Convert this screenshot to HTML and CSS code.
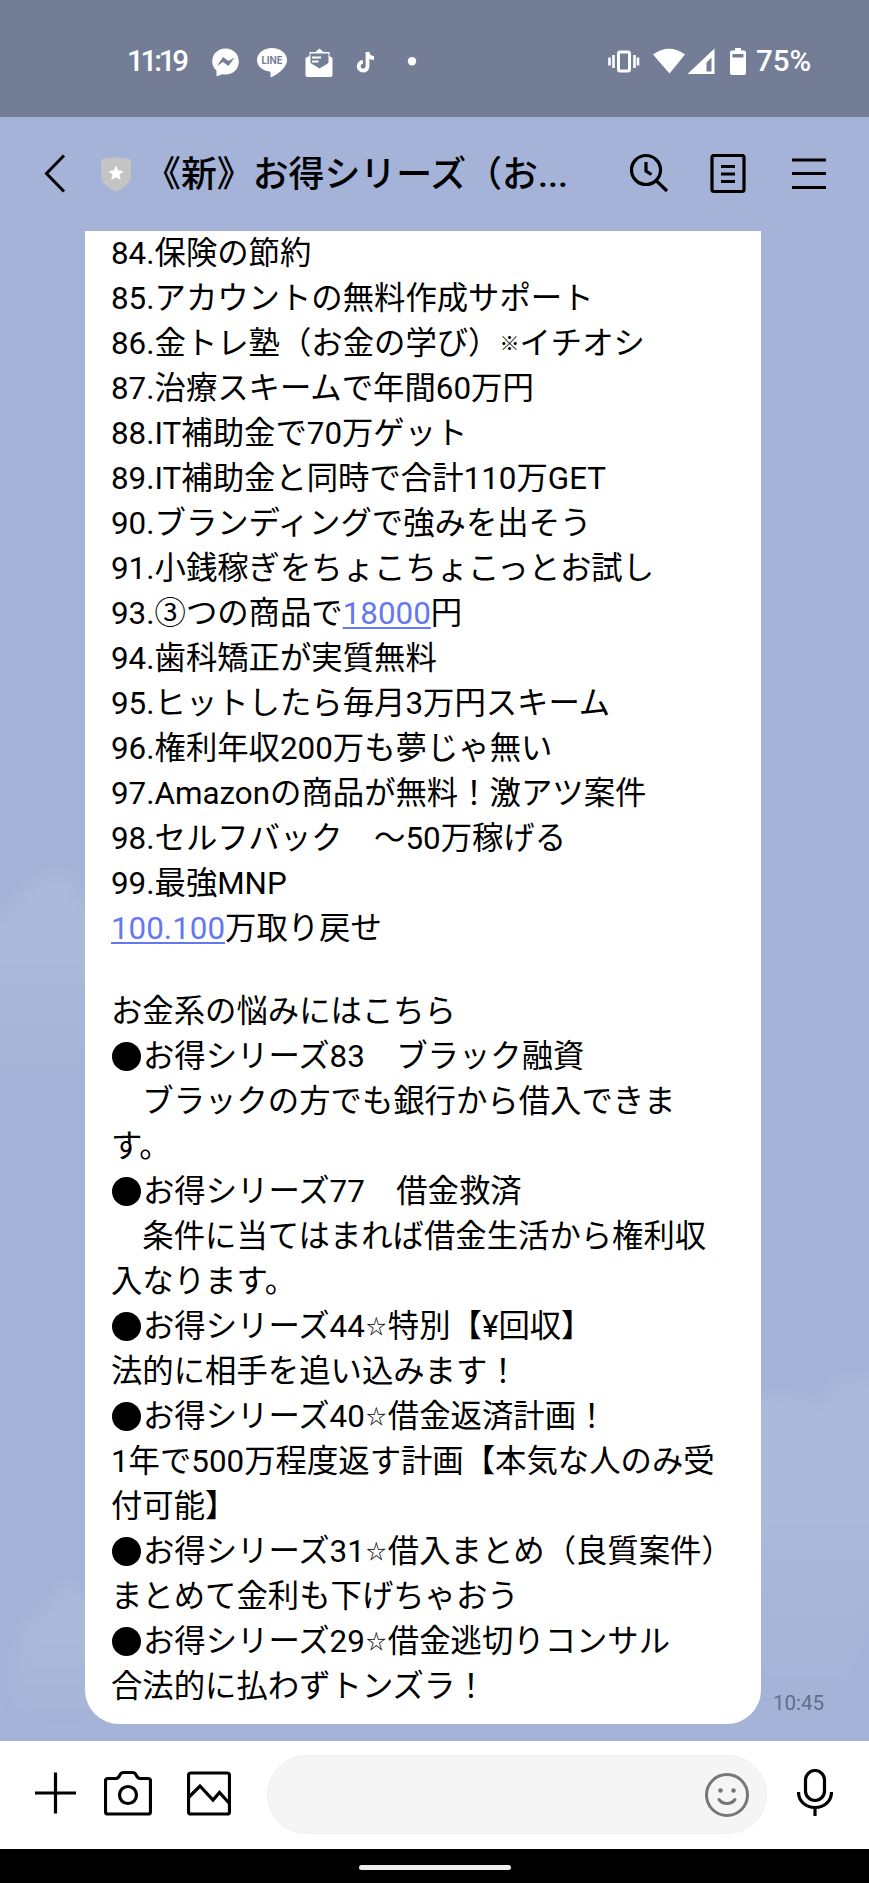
FILE: index.html
```html
<!DOCTYPE html>
<html lang="ja">
<head>
    <meta charset="utf-8">
    <title>お得シリーズ</title>
    <link rel="stylesheet" href="styles.css">
</head>
<body>
    <div class="status-bar">
        <span class="clock">11:19</span>
        <svg class="notifications" width="210" height="36" viewBox="0 0 210 36">
            <!-- messenger -->
            <path fill="#fff" d="M15.500 5.500C7.800 5.500 2.200 11 2.200 18.300c0 4 1.600 7 4.300 9.300v4.600c0 .8.600 1.100 1.300.8l4.200-1.800c1.100.3 2.300.4 3.500.4 7.700 0 13.300-5.600 13.300-13.100S23.200 5.500 15.500 5.500z"/>
            <path fill="#737d96" d="M7 23l6-9 5.500 4 6-3.500-6 8.500-5.500-4z"/>
            <!-- LINE -->
            <path fill="#fff" d="M62 5c-8.200 0-15 5.300-15 12 0 6 5.300 10.700 12.500 11.600 1.400.3 1.200 2.400 1 4.500-.1 1 .5 1.400 1.400 1C66 32 77 25.500 77 17c0-6.700-6.800-12-15-12z"/>
            <text class="line-logo" x="51.500" y="20.600" textLength="21" lengthAdjust="spacingAndGlyphs">LINE</text>
            <!-- mail -->
            <path fill="#fff" d="M95.500 15l4-2V9h6l4-3.500 4 3.500h6v4l3 2v17q0 2-2 2h-23q-2 0-2-2z"/>
            <path fill="#737d96" d="M100.500 10.500h18v9.500l-9 5.500-9-5.500z"/>
            <path stroke="#fff" stroke-width="1.800" d="M102 14.500h9M102 18.500h6.500"/>
            <!-- tiktok -->
            <path fill="none" stroke="#fff" stroke-width="3.800" d="M157.500 9v14.300a4.400 4.400 0 1 1-4.600-4.400M157.500 9c.5 4 2.800 6 6.500 6"/>
            <circle fill="#fff" cx="202" cy="18.300" r="4.200"/>
        </svg>
        <svg class="system" width="140" height="36" viewBox="0 0 140 36">
            <!-- vibrate -->
            <rect x="10.500" y="9" width="11" height="19" rx="1.500" fill="none" stroke="#fff" stroke-width="3"/>
            <path stroke="#fff" stroke-width="2.600" d="M1.500 14.500v8M5.500 12v13M26.500 12v13M30 14.500v8"/>
            <!-- wifi -->
            <path fill="#fff" d="M45 11.500Q61 0 77 11.500L61.500 30.500z"/>
            <!-- signal -->
            <path fill="#fff" fill-rule="evenodd" d="M106.500 5.500V31H79.500zM103.500 14.500l-5 5V28.500h5z"/>
            <!-- battery -->
            <path fill="#fff" fill-rule="evenodd" d="M127 5h6v2.500h3q2 0 2 2V30q0 2-2 2h-12q-2 0-2-2V9.500q0-2 2-2h3zM124.500 11v3.500h11V11z"/>
        </svg>
        <span class="battery">75%</span>
    </div>

    <div class="header">
        <svg class="back" width="24" height="40" viewBox="0 0 24 40"><path d="M21 1.500L3.500 19.500l17.500 18"/></svg>
        <svg class="shield" width="32" height="36" viewBox="0 0 32 36">
            <path fill="#c4c4c4" d="M1 3.500Q16-.5 31 3.500V18c0 9-6 14-15 17.500C7 32 1 27 1 18z"/>
            <path fill="#fff" d="M16 9.500l2.200 5.100 5.500.5-4.200 3.600 1.300 5.400-4.800-2.900-4.800 2.900 1.300-5.400-4.200-3.600 5.500-.5z"/>
        </svg>
        <h1 class="title">《新》お得シリーズ（お...</h1>
        <svg class="icon search" width="40" height="42" viewBox="0 0 40 42">
            <circle cx="17" cy="17" r="14.500"/>
            <path d="M17 9v9l5.500 3.500M27 27.500l11 10.500"/>
        </svg>
        <svg class="icon note" width="36" height="40" viewBox="0 0 36 40">
            <rect x="2" y="1.500" width="32" height="36" rx="2"/>
            <path d="M11 12.500h14M11 20h14M11 27.500h14"/>
        </svg>
        <svg class="icon menu" width="34" height="34" viewBox="0 0 34 34"><path d="M0 3h34M0 16.500h34M0 30.500h34"/></svg>
    </div>

    <div class="chat">
        <svg class="clouds" width="869" height="1510" viewBox="0 0 869 1510">
            <defs>
                <filter id="soft"><feGaussianBlur stdDeviation="6"/></filter>
                <linearGradient id="cloud" x1="0" y1="0" x2="0" y2="1">
                    <stop offset="0" stop-color="#b1c0df" stop-opacity=".55"/>
                    <stop offset=".4" stop-color="#b1c0df" stop-opacity=".55"/>
                    <stop offset="1" stop-color="#b1c0df" stop-opacity="0"/>
                </linearGradient>
            </defs>
            <g filter="url(#soft)" fill="url(#cloud)">
                <path d="M-20 696q22-8 35-20 15-32 45-32 14 0 19 26l30 20v150H-20z"/>
                <path d="M740 1176q30-16 55-8l30 6q10-26 25-23l50-5v90q-30 160-60 230H740z"/>
                <path d="M15 1480q0-60 15-90 20-5 28-25 12-20 22 0l30 10v110z"/>
            </g>
        </svg>
        <div class="bubble">
            <p>84.保険の節約</p>
            <p>85.アカウントの無料作成サポート</p>
            <p>86.金トレ塾（お金の学び）<span class="kome">※</span>イチオシ</p>
            <p>87.治療スキームで年間60万円</p>
            <p>88.IT補助金で70万ゲット</p>
            <p>89.IT補助金と同時で合計110万GET</p>
            <p>90.ブランディングで強みを出そう</p>
            <p>91.小銭稼ぎをちょこちょこっとお試し</p>
            <p>93.③つの商品で<a>18000</a>円</p>
            <p>94.歯科矯正が実質無料</p>
            <p>95.ヒットしたら毎月3万円スキーム</p>
            <p>96.権利年収200万も夢じゃ無い</p>
            <p>97.Amazonの商品が無料！激アツ案件</p>
            <p>98.セルフバック　〜50万稼げる</p>
            <p>99.最強MNP</p>
            <p><a>100.100</a>万取り戻せ</p>
            <p class="blank"></p>
            <p>お金系の悩みにはこちら</p>
            <p><i class="dot"></i>お得シリーズ83　ブラック融資</p>
            <p>　ブラックの方でも銀行から借入できま</p>
            <p>す。</p>
            <p><i class="dot"></i>お得シリーズ77　借金救済</p>
            <p>　条件に当てはまれば借金生活から権利収</p>
            <p>入なります。</p>
            <p><i class="dot"></i>お得シリーズ44<span class="star">☆</span>特別【¥回収】</p>
            <p>法的に相手を追い込みます！</p>
            <p><i class="dot"></i>お得シリーズ40<span class="star">☆</span>借金返済計画！</p>
            <p>1年で500万程度返す計画【本気な人のみ受</p>
            <p>付可能】</p>
            <p><i class="dot"></i>お得シリーズ31<span class="star">☆</span>借入まとめ（良質案件）</p>
            <p>まとめて金利も下げちゃおう</p>
            <p><i class="dot"></i>お得シリーズ29<span class="star">☆</span>借金逃切りコンサル</p>
            <p>合法的に払わずトンズラ！</p>
        </div>
        <span class="time">10:45</span>
    </div>

    <div class="input-bar">
        <svg class="icon plus" width="42" height="42" viewBox="0 0 42 42"><path d="M21.500 .5v41M1 21h41"/></svg>
        <svg class="icon camera" width="48" height="46" viewBox="0 0 48 46">
            <path d="M4 8.500h8q2 0 3-2l1.500-2.500q1-1.500 3-1.500h9q2 0 3 1.500L33 6.500q1 2 3 2h8q2.500 0 2.500 2.500v30.500q0 2.500-2.500 2.500H4q-2.500 0-2.500-2.500V11q0-2.500 2.500-2.500z"/>
            <circle cx="24" cy="25" r="8.500"/>
        </svg>
        <svg class="icon picture" width="44" height="46" viewBox="0 0 44 46">
            <rect x="1.500" y="3" width="41" height="41" rx="2.500"/>
            <path d="M2 27l11-11 13 14 6.500-7.500L42 33"/>
        </svg>
        <div class="field">
            <svg class="smile" width="44" height="44" viewBox="0 0 44 44">
                <circle cx="22" cy="22" r="20.500"/>
                <path d="M14 26.500q3 4 8 4t8-4"/>
                <circle class="eye" cx="15.500" cy="17.500" r="2.300"/>
                <circle class="eye" cx="28.500" cy="17.500" r="2.300"/>
            </svg>
        </div>
        <svg class="icon mic" width="36" height="48" viewBox="0 0 36 48">
            <rect x="8.500" y="1.500" width="19" height="30" rx="9.500"/>
            <path d="M1.500 23c0 9 7 15.500 16.500 15.500S34.500 32 34.500 23M18 38.500V47"/>
        </svg>
    </div>

    <div class="nav-bar"><div class="handle"></div></div>
</body>
</html>
```
FILE: styles.css
```css
* { box-sizing: border-box; }
body { margin: 0; width: 869px; height: 1883px; display: flex; flex-direction: column; overflow: hidden; background: #a4b3d7; color: #000; font-family: Roboto, "Noto Sans CJK JP", sans-serif; }
svg { display: block; flex: none; }

.status-bar { flex: none; height: 117px; padding: 5px 55px 0 127px; display: flex; align-items: center; background: #737d96; color: #fff; font-size: 29.500px; font-weight: 500; }
.clock { width: 83px; letter-spacing: -3.200px; }
.line-logo { font: 700 10.500px Inter, sans-serif; fill: #737d96; }
.system { margin-left: auto; }
.battery { width: 58px; margin-left: 8px; white-space: nowrap; }

.header { flex: none; height: 114px; padding: 0 0 0 43px; display: flex; align-items: center; }
.back { fill: none; stroke: #000; stroke-width: 3; }
.shield { margin-left: 33px; }
.title { width: 434px; margin: 1px 0 0 13px; font-size: 35.900px; line-height: 50px; font-weight: 500; white-space: nowrap; }
.icon { fill: none; stroke: #000; stroke-width: 3.200; }
.search { margin-left: 50px; }
.note { margin-left: 41px; }
.menu { margin-left: 46px; }

.chat { position: relative; flex: none; height: 1510px; padding: 0 0 17px 85px; display: flex; align-items: flex-end; overflow: hidden; }
.clouds { position: absolute; left: 0; top: 0; }
.bubble { position: relative; width: 676px; height: 1493px; padding: 0 26px; border-radius: 0 0 34px 34px; background: #fff; font-size: 31.370px; line-height: 45px; white-space: nowrap; }
.bubble p { margin: 0; height: 45px; }
.bubble .blank { height: 37.500px; }
.bubble a { color: #6478ef; text-decoration: underline; text-decoration-thickness: 2px; text-underline-offset: 3px; }
.dot { display: inline-block; width: 29px; height: 29px; margin: 0 2px 0 1px; border-radius: 50%; background: #000; vertical-align: -4px; }
.kome, .star { display: inline-block; line-height: 30px; text-align: center; vertical-align: 3px; }
.kome { width: 20px; font-size: 20px; font-weight: 700; }
.star { width: 23px; font-size: 20px; }
.time { position: relative; margin: 0 0 8px 12px; font-size: 20.500px; line-height: 26px; color: #636e89; }

.input-bar { flex: none; height: 108px; padding: 0 36px 4px 34px; display: flex; align-items: center; background: #fff; }
.camera { margin-left: 28px; }
.picture { margin-left: 35px; }
.field { width: 500px; height: 79px; margin: 3px 0 0 36px; padding-right: 17px; display: flex; align-items: center; justify-content: flex-end; border: 1px solid #efefef; border-radius: 40px; background: #f5f5f5; }
.smile { fill: none; stroke: #777; stroke-width: 3; stroke-linecap: round; }
.smile .eye { fill: #777; stroke: none; }
.mic { margin-left: 30px; }

.nav-bar { flex: none; height: 34px; padding-top: 16px; background: #000; }
.handle { width: 152px; height: 5px; margin: 0 auto; border-radius: 3px; background: #eee; }
```
